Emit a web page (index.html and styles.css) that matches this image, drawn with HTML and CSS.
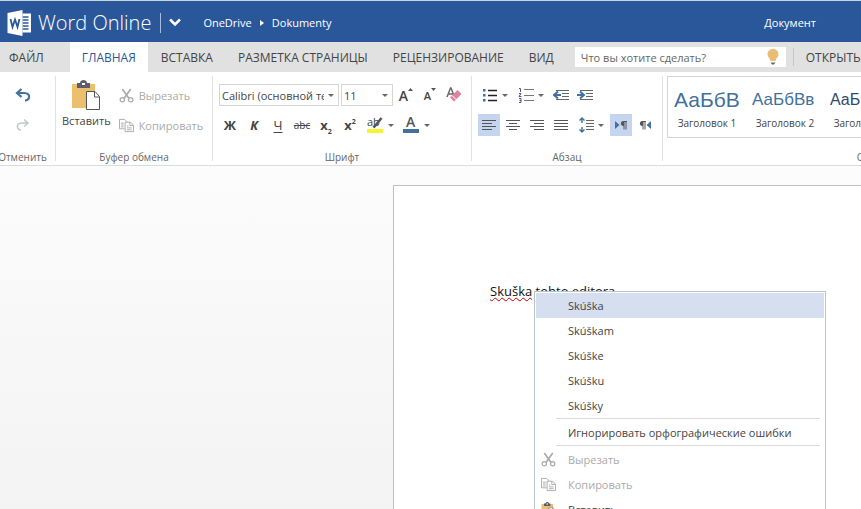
FILE: index.html
```html
<!DOCTYPE html>
<html lang="ru">

<head>
  <meta charset="UTF-8">
  <title>Документ - Word Online</title>
  <link rel="stylesheet" href="styles.css">
</head>

<body>
  <!-- shared icons -->
  <svg class="sprite" aria-hidden="true">
    <symbol id="cut" viewBox="0 0 16 16">
      <g fill="none" stroke="currentColor">
        <path d="M3.500 1 L10.500 11 M12.500 1 L5.500 11" stroke-width="1.800" />
        <circle cx="3.500" cy="12.500" r="2.300" stroke-width="1.300" />
        <circle cx="12.500" cy="12.500" r="2.300" stroke-width="1.300" />
      </g>
    </symbol>
    <symbol id="copy" viewBox="0 0 16 16">
      <g fill="none" stroke="currentColor">
        <path d="M6 11.500H.5V1.500H6L8.500 4" />
        <path d="M6.500 4.500H12L15.500 7.500V14.500H6.500Z M11.500 4.500V8H15" />
        <path d="M2 5.500H5 M2 7.500H5 M2 9.500H5 M8.500 8.500H10 M8.500 10.500H13.500 M8.500 12.500H13.500" />
      </g>
    </symbol>
    <symbol id="paste" viewBox="0 0 30 30">
      <path d="M1 4H24V28H1Z" fill="#ecbf6d" />
      <path d="M6 3H9C9-1 16-1 16 3H19V8H6Z" fill="#5c5f6b" />
      <path d="M11 3h3v2h-3z" fill="#fff" />
      <path d="M15.500 11.500H24L28.500 16.500V29.500H15.500Z" fill="#fff" stroke="#555" />
      <path d="M23.500 11.500V17H28.500" fill="none" stroke="#555" />
    </symbol>
  </svg>

  <header class="topbar">
    <svg class="logo" viewBox="0 0 24 26" aria-hidden="true">
      <path d="M15 3.500H23.500V22.500H15Z" fill="#fff" />
      <path d="M15 7H21 M15 10H21 M15 13H21 M15 16H21 M15 19H21" stroke="#2a579a" stroke-width="1.300" />
      <path d="M0 3L15 0V26L0 23Z" fill="#fff" />
      <path d="M3 9L5 17L7.500 9.500L10 17L12 9" fill="none" stroke="#2a579a" stroke-width="1.800" />
    </svg>
    <span class="brand">Word Online</span>
    <button class="app-menu" type="button" aria-label="Приложения">
      <svg width="12" height="9" viewBox="0 0 12 9"><path d="M1 1.500L6 6.500L11 1.500" fill="none" stroke="#fff" stroke-width="2.500" /></svg>
    </button>
    <nav class="crumbs">
      <a href="#">OneDrive</a>
      <svg width="4" height="8" viewBox="0 0 4 8"><path d="M0 1L4 4L0 7Z" fill="#fff" /></svg>
      <a href="#">Dokumenty</a>
    </nav>
    <span class="doc-name">Документ</span>
  </header>

  <nav class="tabs">
    <button class="tab file" type="button">ФАЙЛ</button>
    <button class="tab active" type="button">ГЛАВНАЯ</button>
    <button class="tab" type="button">ВСТАВКА</button>
    <button class="tab" type="button">РАЗМЕТКА СТРАНИЦЫ</button>
    <button class="tab" type="button">РЕЦЕНЗИРОВАНИЕ</button>
    <button class="tab" type="button">ВИД</button>
    <div class="search">
      <input type="text" placeholder="Что вы хотите сделать?" aria-label="Что вы хотите сделать?">
      <svg width="12" height="16" viewBox="0 0 12 16" aria-hidden="true">
        <path d="M6 0C2.500 0 .5 2.500.5 5.500C.5 8 3 9 3.500 12H8.500C9 9 11.500 8 11.500 5.500C11.500 2.500 9.500 0 6 0Z" fill="#e9bd72" />
        <path d="M3.500 13.500H8.500L7 15.500H5Z" fill="#666" />
      </svg>
    </div>
    <button class="tab open" type="button">ОТКРЫТЬ</button>
  </nav>

  <div class="ribbon">
    <section class="group undo-group">
      <div class="rows">
        <div class="row">
          <button class="btn" type="button" aria-label="Отменить">
            <svg width="16" height="16" viewBox="0 0 16 16"><path d="M6.500 2L2 6L6.500 10 M2 6H9C13 6 14.500 8 14 10.500C13.500 12.500 12 13.500 10 13.500" fill="none" stroke="#41719c" stroke-width="2.200" /></svg>
          </button>
        </div>
        <div class="row">
          <button class="btn" type="button" aria-label="Вернуть" disabled>
            <svg width="16" height="16" viewBox="0 0 16 16"><path d="M9 2.500L13 6L9 9.500 M13 6H7C3 6 2 8 2.500 10.500C3 12 4.500 13 6 13" fill="none" stroke="#c4c8cc" stroke-width="1.500" /></svg>
          </button>
        </div>
      </div>
      <h2>Отменить</h2>
    </section>

    <section class="group clip-group">
      <div class="clip">
        <button class="paste" type="button">
          <svg width="30" height="30"><use href="#paste" /></svg>
          Вставить
        </button>
        <div class="rows">
          <button class="text-btn" type="button" disabled><svg width="15" height="15"><use href="#cut" /></svg>Вырезать</button>
          <button class="text-btn" type="button" disabled><svg width="15" height="15"><use href="#copy" /></svg>Копировать</button>
        </div>
      </div>
      <h2>Буфер обмена</h2>
    </section>

    <section class="group font-group">
      <div class="rows">
        <div class="row">
          <span class="combo font-name"><select aria-label="Шрифт"><option>Calibri (основной текст)</option></select></span>
          <span class="combo font-size"><select aria-label="Размер шрифта"><option>11</option></select></span>
          <button class="btn" type="button" aria-label="Увеличить размер">
            <span class="grow">A</span><svg class="mark" width="5" height="3" viewBox="0 0 5 3"><path d="M0 3L2.500 0L5 3Z" fill="#555" /></svg>
          </button>
          <button class="btn" type="button" aria-label="Уменьшить размер">
            <span class="shrink">A</span><svg class="mark" width="5" height="3" viewBox="0 0 5 3"><path d="M0 0L2.500 3L5 0Z" fill="#555" /></svg>
          </button>
          <button class="btn" type="button" aria-label="Очистить формат">
            <svg width="16" height="16" viewBox="0 0 16 16">
              <path d="M1 10L4.500 1H5L8.500 10 M2.500 7H7" fill="none" stroke="#666" stroke-width="1.400" />
              <path d="M11.500 3L15.500 7L8 14.500L4 10.500Z" fill="#df829b" />
              <path d="M6 8.500L10 12.500" stroke="#fff" />
            </svg>
          </button>
        </div>
        <div class="row">
          <button class="btn bold" type="button">Ж</button>
          <button class="btn italic" type="button">К</button>
          <button class="btn under" type="button">Ч</button>
          <button class="btn strike" type="button">abc</button>
          <button class="btn script" type="button">x<sub>2</sub></button>
          <button class="btn script" type="button">x<sup>2</sup></button>
          <button class="btn drop" type="button" aria-label="Цвет выделения">
            <svg width="18" height="18" viewBox="0 0 18 18">
              <text x="1" y="10" font-size="11" fill="#444">ab</text>
              <path d="M15.500 2L9 10L7.500 11.500" stroke="#555" stroke-width="2.500" fill="none" />
              <path d="M1 13H17V17H1Z" fill="#f8f32b" />
            </svg>
          </button>
          <button class="btn drop" type="button" aria-label="Цвет текста">
            <svg width="18" height="18" viewBox="0 0 18 18">
              <text x="4" y="11" font-size="14" font-weight="600" fill="#555">A</text>
              <path d="M1 13H17V17H1Z" fill="#41719c" />
            </svg>
          </button>
        </div>
      </div>
      <h2>Шрифт</h2>
    </section>

    <section class="group para-group">
      <div class="rows">
        <div class="row">
          <button class="btn drop" type="button" aria-label="Маркеры">
            <svg width="16" height="16" viewBox="0 0 16 16">
              <path d="M6 3.500H15 M6 8.500H15 M6 13.500H15" stroke="#222" stroke-width="1.300" />
              <path d="M1 2h2.500v2.500H1z M1 7h2.500v2.500H1z M1 12h2.500v2.500H1z" fill="#41719c" />
            </svg>
          </button>
          <button class="btn drop" type="button" aria-label="Нумерация">
            <svg width="16" height="16" viewBox="0 0 16 16">
              <path d="M6 2.500H16 M6 8.500H16 M6 13.500H16" stroke="#777" />
              <path d="M1 1.500H2.500V5 M1 6.500H3L1 9.500H3.500 M1 11.500H3V15.500H1 M1.500 13.500H3" fill="none" stroke="#557" />
            </svg>
          </button>
          <button class="btn" type="button" aria-label="Уменьшить отступ">
            <svg width="16" height="16" viewBox="0 0 16 16">
              <path d="M3 3.500H16 M9 6.500H16 M9 9.500H16 M3 12.500H16" stroke="#666" />
              <path d="M8 8H2 M5 4.500L1 8L5 11.500" fill="none" stroke="#41719c" stroke-width="2" />
            </svg>
          </button>
          <button class="btn" type="button" aria-label="Увеличить отступ">
            <svg width="16" height="16" viewBox="0 0 16 16">
              <path d="M3 3.500H16 M9 6.500H16 M9 9.500H16 M3 12.500H16" stroke="#666" />
              <path d="M0 8H6 M3 4.500L7 8L3 11.500" fill="none" stroke="#41719c" stroke-width="2" />
            </svg>
          </button>
        </div>
        <div class="row">
          <button class="btn on" type="button" aria-label="По левому краю">
            <svg width="14" height="12" viewBox="0 0 14 12"><path d="M0 1.500H14 M0 4.500H10 M0 7.500H14 M0 10.500H10" stroke="#555" /></svg>
          </button>
          <button class="btn" type="button" aria-label="По центру">
            <svg width="14" height="12" viewBox="0 0 14 12"><path d="M0 1.500H14 M3 4.500H11 M0 7.500H14 M3 10.500H11" stroke="#555" /></svg>
          </button>
          <button class="btn" type="button" aria-label="По правому краю">
            <svg width="14" height="12" viewBox="0 0 14 12"><path d="M0 1.500H14 M4 4.500H14 M0 7.500H14 M4 10.500H14" stroke="#555" /></svg>
          </button>
          <button class="btn" type="button" aria-label="По ширине">
            <svg width="14" height="12" viewBox="0 0 14 12"><path d="M0 1.500H14 M0 4.500H14 M0 7.500H14 M0 10.500H14" stroke="#555" /></svg>
          </button>
          <button class="btn drop" type="button" aria-label="Интервал">
            <svg width="15" height="16" viewBox="0 0 15 16">
              <path d="M7 3.500H15 M7 6.500H15 M7 9.500H15 M7 12.500H15" stroke="#666" />
              <path d="M3 1V6 M.5 3.500L3 1L5.500 3.500 M3 10V15 M.5 12.500L3 15L5.500 12.500" fill="none" stroke="#41719c" stroke-width="1.400" />
            </svg>
          </button>
          <button class="btn on" type="button" aria-label="Слева направо">
            <svg width="12" height="10" viewBox="0 0 12 10"><path d="M0 1L4.500 5L0 9Z" fill="#41719c" /><path d="M8.500 1H12V2H11.500V9.500H10.500V2H9.500V9.500H8.500V6C5 6 5 1 8.500 1Z" fill="#555" /></svg>
          </button>
          <button class="btn" type="button" aria-label="Справа налево">
            <svg width="12" height="10" viewBox="0 0 12 10"><path d="M12 1L7.500 5L12 9Z" fill="#41719c" /><path d="M3.500 1H7V2H6.500V9.500H5.500V2H4.500V9.500H3.500V6C0 6 0 1 3.500 1Z" fill="#555" /></svg>
          </button>
        </div>
      </div>
      <h2>Абзац</h2>
    </section>

    <section class="group style-group">
      <div class="gallery">
        <button class="style" type="button"><span class="sample h1">АаБбВв</span>Заголовок 1</button>
        <button class="style" type="button"><span class="sample h2">АаБбВв</span>Заголовок 2</button>
        <button class="style" type="button"><span class="sample h3">АаБбВв</span>Заголовок 3</button>
      </div>
      <h2>Стили</h2>
    </section>
  </div>

  <main class="canvas">
    <article class="sheet">
      <p><span class="typo">Skuška</span> tohto editora</p>
      <div class="menu" role="menu">
        <button class="selected" type="button" role="menuitem">Skúška</button>
        <button type="button" role="menuitem">Skúškam</button>
        <button type="button" role="menuitem">Skúške</button>
        <button type="button" role="menuitem">Skúšku</button>
        <button type="button" role="menuitem">Skúšky</button>
        <hr>
        <button type="button" role="menuitem">Игнорировать орфографические ошибки</button>
        <hr>
        <button type="button" role="menuitem" disabled><svg width="15" height="15"><use href="#cut" /></svg>Вырезать</button>
        <button type="button" role="menuitem" disabled><svg width="15" height="15"><use href="#copy" /></svg>Копировать</button>
        <button type="button" role="menuitem"><svg width="15" height="15"><use href="#paste" /></svg>Вставить</button>
      </div>
    </article>
  </main>
</body>

</html>
```

FILE: styles.css
```css
* {
  box-sizing: border-box;
}

body {
  margin: 0;
  height: 100vh;
  display: flex;
  flex-direction: column;
  overflow: hidden;
  font-family: "Open Sans", "Noto Sans", sans-serif;
  font-size: 11px;
  color: #444;
  background: #fff;
}

button,
input,
select {
  font: inherit;
  color: inherit;
  border: none;
  background: none;
  padding: 0;
  margin: 0;
}

button {
  white-space: nowrap;
}

svg {
  display: block;
  flex: none;
}

.sprite {
  display: none;
}

/* top bar */
.topbar {
  flex: none;
  display: flex;
  align-items: center;
  height: 42px;
  padding: 2px 45px 0 7px;
  background: #2a579a;
  border-top: 1px solid #c9d3da;
  color: #fff;
}

.logo {
  width: 25px;
  height: 26px;
}

.brand {
  margin-left: 6px;
  font-size: 20px;
  font-weight: 300;
  white-space: nowrap;
}

.app-menu {
  height: 20px;
  margin-left: 9px;
  padding-left: 8px;
  border-left: 1px solid #a9bcd9;
}

.crumbs {
  display: flex;
  align-items: center;
  gap: 8px;
  margin-left: 22px;
}

.crumbs a {
  color: #fff;
  text-decoration: none;
}

.doc-name {
  margin-left: auto;
}

/* tabs */
.tabs {
  flex: none;
  display: flex;
  align-items: center;
  gap: 1px;
  height: 30px;
  background: #e1e1e1;
}

.tab {
  flex: none;
  height: 30px;
  padding: 0 12px;
  font-size: 12px;
}

.tab.file {
  padding: 0 25px 0 9px;
}

.tab.active {
  background: #fff;
  color: #2a579a;
}

.search {
  flex: none;
  display: flex;
  align-items: center;
  width: 211px;
  height: 20px;
  margin: 0 6px 0 8px;
  padding: 0 7px 0 6px;
  background: #fff;
}

.search input {
  flex: 1;
  min-width: 0;
}

.search input::placeholder {
  color: #666;
  opacity: 1;
}

.tab.open {
  height: 18px;
  padding: 0 0 0 12px;
  border-left: 1px solid #c6c6c6;
}

/* ribbon */
.ribbon {
  flex: none;
  display: flex;
  height: 94px;
  padding: 4px 0;
  border-bottom: 1px solid #dcdcdc;
}

.group {
  flex: none;
  display: flex;
  flex-direction: column;
  justify-content: space-between;
  padding: 0 6px;
  border-right: 1px solid #e1e1e1;
}

.group h2 {
  margin: 0;
  font-size: 10px;
  line-height: 8px;
  font-weight: 400;
  text-align: center;
  color: #666;
}

.rows {
  display: flex;
  flex-direction: column;
  gap: 8px;
  padding-top: 8px;
}

.row {
  display: flex;
  align-items: center;
  gap: 2px;
}

.undo-group {
  align-items: center;
  width: 66px;
  margin-left: -10px;
}

.clip-group {
  width: 157px;
}

.font-group {
  width: 259px;
}

.para-group {
  width: 191px;
}

.style-group {
  width: 418px;
  padding: 0 4px;
}

.btn {
  display: flex;
  align-items: center;
  justify-content: center;
  width: 22px;
  height: 22px;
}

.btn.on {
  background: #c5d5ef;
}

.btn.drop {
  width: 34px;
  gap: 4px;
}

.btn.drop::after,
.combo::after {
  content: "";
  border: 3px solid transparent;
  border-top-color: #666;
  border-bottom: none;
}

.clip {
  display: flex;
  gap: 8px;
}

.paste {
  display: flex;
  flex-direction: column;
  align-items: center;
  gap: 3px;
  padding-top: 4px;
}

.text-btn {
  display: flex;
  align-items: center;
  gap: 5px;
  height: 22px;
}

.text-btn:disabled,
.menu button:disabled {
  color: #aaa;
}

.combo {
  display: flex;
  align-items: center;
  gap: 4px;
  height: 22px;
  padding: 0 4px 0 2px;
  border: 1px solid #d5d5d5;
}

.combo select {
  flex: 1;
  min-width: 0;
  appearance: none;
  overflow: hidden;
}

.font-name {
  width: 120px;
}

.font-size {
  width: 52px;
}

.grow {
  font-size: 14px;
  font-weight: 600;
}

.shrink {
  font-size: 11px;
  font-weight: 600;
}

.mark {
  align-self: flex-start;
  margin-top: 4px;
}

.bold,
.italic,
.script {
  font-size: 13px;
  font-weight: 700;
}

.italic {
  font-style: italic;
}

.under {
  font-size: 13px;
  text-decoration: underline;
  text-underline-offset: 2px;
}

.strike {
  font-size: 10px;
  text-decoration: line-through;
}

.script sub,
.script sup {
  font-size: 7px;
  line-height: 8px;
}

.script sub {
  align-self: flex-end;
}

.script sup {
  align-self: flex-start;
  margin-top: 4px;
}

.gallery {
  display: flex;
  height: 62px;
  border: 1px solid #d5d5d5;
}

.style {
  display: flex;
  flex-direction: column;
  width: 78px;
  padding: 6px;
  align-items: center;
  font-size: 10px;
}

.sample {
  width: 100%;
  height: 33px;
  line-height: 34px;
  overflow: hidden;
  text-align: left;
  font-family: "Liberation Sans", Arial, sans-serif;
  color: #41719c;
}

.sample.h1 {
  font-size: 21px;
}

.sample.h2 {
  font-size: 17px;
}

.sample.h3 {
  font-size: 16px;
  color: #2f4a68;
}

/* document */
.canvas {
  flex: 1;
  min-height: 0;
  padding: 19px 0 0 393px;
  background: linear-gradient(#fcfcfc, #f3f3f3);
}

.sheet {
  position: relative;
  width: 816px;
  height: 1056px;
  padding: 95px 96px;
  background: #fff;
  border: 1px solid #c0c0c0;
  color: #111;
}

.sheet p {
  margin: 0;
  font-size: 13px;
  line-height: 20px;
}

.typo {
  text-decoration: underline wavy #c00000 1px;
}

/* context menu */
.menu {
  position: absolute;
  left: 140px;
  top: 105px;
  width: 292px;
  padding: 1px;
  background: #fff;
  border: 1px solid #b8c4cc;
  color: #444;
}

.menu button {
  display: flex;
  align-items: center;
  width: 100%;
  height: 25px;
  padding-left: 32px;
  text-align: left;
}

.menu button svg {
  margin: 0 12px 0 -27px;
}

.menu button.selected {
  background: #d5dff0;
}

.menu hr {
  margin: 0 4px 1px 20px;
  border: none;
  border-top: 1px solid #dcdcdc;
}
```
